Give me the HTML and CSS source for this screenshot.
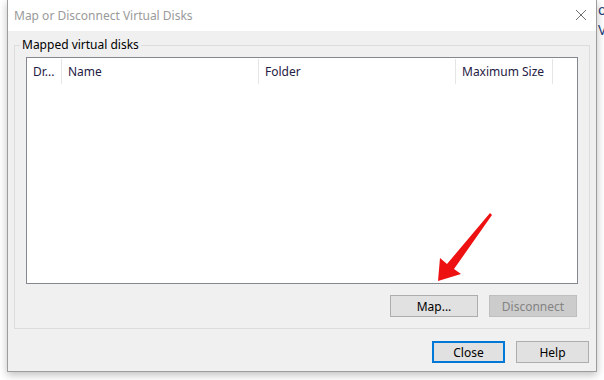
FILE: index.html
```html
<!DOCTYPE html>
<html lang="en">
<head>
  <meta charset="UTF-8">
  <title>Map or Disconnect Virtual Disks</title>
  <link rel="stylesheet" href="styles.css">
</head>
<body>

<div class="desktop">
  <!-- Dialog window -->
  <div class="window">
    <div class="titlebar">
      <span class="title">Map or Disconnect Virtual Disks</span>
      <svg class="close-x" width="12" height="12" viewBox="0 0 12 12">
        <path d="M1 1 L11 11 M11 1 L1 11" stroke="#6f6f6f" stroke-width="1" fill="none"/>
      </svg>
    </div>

    <div class="client">
      <fieldset class="group">
        <legend>Mapped virtual disks</legend>

        <div class="listview">
          <div class="lv-header">
            <div class="col col-drive">Dr...</div>
            <div class="col col-name">Name</div>
            <div class="col col-folder">Folder</div>
            <div class="col col-size">Maximum Size</div>
          </div>
        </div>

        <div class="row-buttons">
          <button class="btn">Map...</button>
          <button class="btn" disabled>Disconnect</button>
        </div>
      </fieldset>

      <div class="row-buttons dialog-buttons">
        <button class="btn btn-default">Close</button>
        <button class="btn">Help</button>
      </div>
    </div>

    <!-- Flecha roja de anotación -->
    <svg class="arrow" width="70" height="80" viewBox="0 0 70 80">
      <polygon points="60,2 62,4 24,58 31,63 8,70 10,47 17,53" fill="#ee1111"/>
    </svg>
  </div>

  <!-- Lo que se ve detrás de la ventana -->
  <div class="behind">
    <p>o .</p>
    <p>Vi</p>
  </div>
</div>

</body>
</html>
```

FILE: styles.css
```css
body {
  margin: 0;
  background-color: #ffffff;
  font-family: "Noto Sans", "Liberation Sans", sans-serif;
  font-size: 12px;
}

.desktop {
  display: flex;
  padding-left: 7px;
  height: 380px;
  overflow: hidden;
}

.window {
  position: relative;
  width: 590px;
  height: 372px;
  box-sizing: border-box;
  border: 1px solid #9d9d9d;
  border-top: none;
  background-color: #f0f0f0;
  box-shadow: 0 3px 8px rgba(0, 0, 0, 0.25);
  flex-shrink: 0;
}

.titlebar {
  height: 31px;
  background-color: #fff;
  display: flex;
  align-items: center;
  justify-content: space-between;
  padding: 0 9px 0 6px;
}

.title {
  color: #9a9a9a;
  font-size: 12px;
  margin-top: -1px;
}

.close-x {
  margin-top: -2px;
}

.client {
  padding: 7px 6px 0 6px;
}

/* Group box */
.group {
  margin: 0;
  padding: 5px 11px 11px 11px;
  border: 1px solid #dcdcdc;
  width: 576px;
  box-sizing: border-box;
}

.group legend {
  padding: 0 2px;
  margin-left: -6px;
  line-height: 14px;
  color: #000;
}

/* Lista */
.listview {
  height: 227px;
  box-sizing: border-box;
  border: 1px solid #828790;
  background-color: #fff;
}

.lv-header {
  display: flex;
  height: 26px;
  padding-top: 1px;
}

.col {
  display: flex;
  align-items: center;
  padding-left: 6px;
  color: #1f2044;
  border-right: 1px solid #e5e5e5;
  box-sizing: border-box;
  height: 25px;
}

.col-drive { width: 35px; }
.col-name { width: 197px; }
.col-folder { width: 197px; }
.col-size { width: 97px; }

/* Botones */
.row-buttons {
  display: flex;
  justify-content: flex-end;
  gap: 11px;
  margin-top: 11px;
  padding-right: 1px;
}

.btn {
  width: 88px;
  height: 22px;
  padding: 0;
  font-family: inherit;
  font-size: 12px;
  color: #000;
  background-color: #e1e1e1;
  border: 1px solid #adadad;
  border-radius: 0;
}

.btn:disabled {
  background-color: #cccccc;
  border-color: #bfbfbf;
  color: #838383;
}

.dialog-buttons {
  margin-top: 12px;
}

.dialog-buttons .btn {
  width: 73px;
}

.btn-default {
  border: 2px solid #0078d7;
}

.arrow {
  position: absolute;
  left: 422px;
  top: 211px;
}

.behind {
  flex-shrink: 0;
  width: 40px;
  padding: 2px 0 0 1px;
  color: #1c3f7c;
  font-size: 14px;
  white-space: nowrap;
}

.behind p {
  margin: 0 0 4px 0;
  line-height: 16px;
}
```
